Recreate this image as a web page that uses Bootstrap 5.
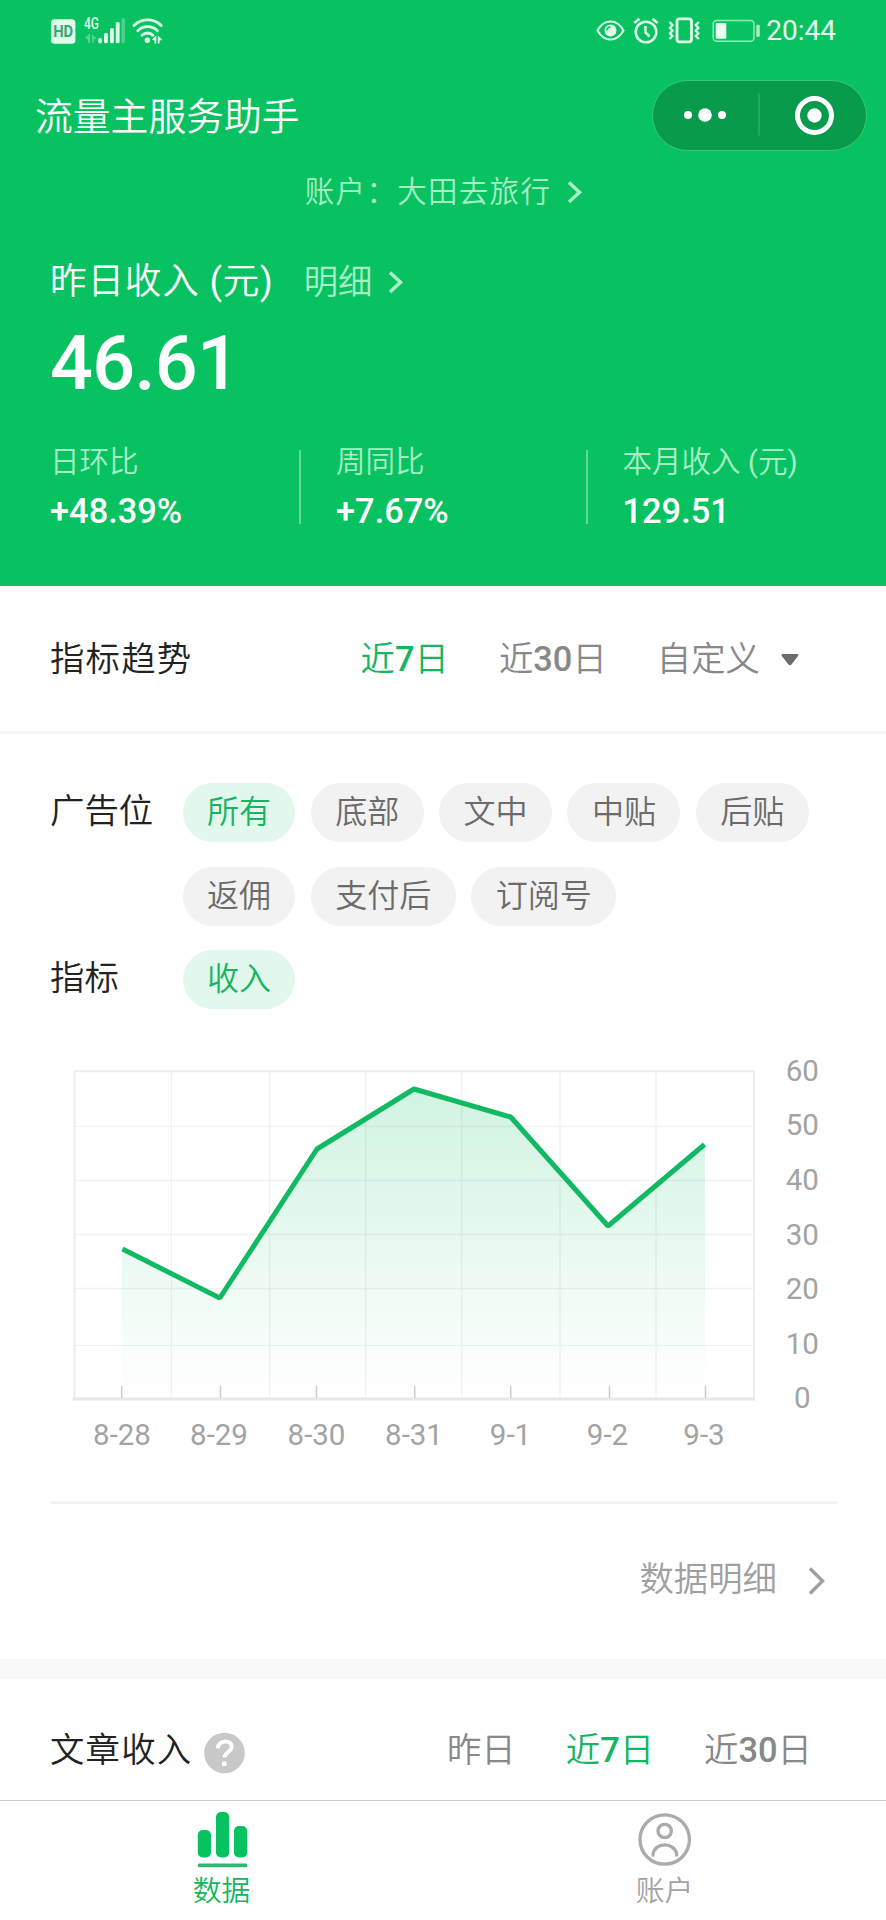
<!DOCTYPE html>
<html lang="zh-CN">
<head>
<meta charset="utf-8">
<meta name="viewport" content="width=device-width, initial-scale=1">
<title>流量主服务助手</title>
<link href="https://cdn.jsdelivr.net/npm/bootstrap@5.3.0/dist/css/bootstrap.min.css" rel="stylesheet">
<style>
  :root { --brand: #08c261; --brand-text: #16b55f; }
  body { font-family: Roboto, "Noto Sans CJK SC DemiLight", "Noto Sans CJK SC", sans-serif; font-size: 34.4px; line-height: 48px; color: #222; background: #fff; }
  .screen { height: 1920px; }
  .hero { height: 586px; background: var(--brand); }
  .status-row { height: 62px; padding: 0 50px 0 48px; }
  .clock { font-size: 28px; line-height: 34px; color: #e6fbef; margin-left: 1px; }
  .title-row { height: 106px; padding: 0 19px 0 35px; }
  .app-title { font-size: 37.8px; padding-top: 3px; }
  .capsule { width: 215px; height: 71px; border: 1.5px solid #36c979; background: #079b4b; }
  .account { height: 48px; font-size: 29.5px; letter-spacing: 1.3px; color: #a6efc6; padding-left: 2px; }
  .soft { color: #a6efc6; }
  .income { padding: 41px 50px 0; }
  .income-head { height: 50px; font-size: 36.6px; letter-spacing: .8px; }
  .detail { font-size: 34.4px; letter-spacing: 0; margin-left: 30px; }
  .amount { font-size: 75.5px; line-height: 80px; font-weight: 500; letter-spacing: -.7px; }
  .stats { margin-top: 47px; }
  .stat { width: 286.5px; height: 74px; flex-shrink: 0; }
  .stat + .stat { border-left: 2px solid #5edb97; padding-left: 35px; }
  .stat:first-child { width: 249px; }
  .stat-label { font-size: 29.5px; line-height: 36px; margin-top: -6px; color: #a6efc6; }
  .stat-value { font-size: 34.4px; font-weight: 500; line-height: 40px; margin-top: 11px; }
  .digit { font-weight: 500; }
  .bar-row { height: 148px; padding: 0 87px 0 50px; border-bottom: 3px solid #f3f3f3; }
  .heading { letter-spacing: 1.2px; }
  .tab { color: #888; }
  .tab + .tab { margin-left: 50px; }
  .tab.on { color: var(--brand-text); }
  .caret { margin-left: 21px; margin-top: 2px; }
  .filters { padding: 49px 0 0 50px; }
  .filter-label { width: 132.500px; line-height: 57px; }
  .chips { gap: 24.5px 15.4px; }
  .chip { height: 59px; padding: 0 24.4px; font-size: 32.1px; line-height: 58px; color: #6b6b6b; background: #f2f2f2; }
  .chip.on { color: var(--brand-text); background: #e3f8ec; }
  .plot { display: block; }
  .plot text { font-size: 29.5px; fill: #a3a3a3; text-anchor: middle; }
  .more { margin: 0 49px 0 50px; border-top: 3px solid #f3f3f3; height: 158px; padding-right: 12px; color: #a0a0a0; }
  .more-text { padding-bottom: 5px; margin-right: 31px; }
  .band { height: 20px; background: #f9f9f9; }
  .article-row { height: 121px; padding: 47px 74px 0 50px; }
  .help { margin-left: 12px; }
  .tabbar { height: 120px; border-top: 1px solid #ccc; font-size: 28.8px; line-height: 36px; color: #a3a3a3; }
  .tabbar .on { color: var(--brand-text); }
</style>
</head>
<body>
<div class="screen d-flex flex-column overflow-hidden">
  <header class="hero text-white flex-shrink-0">
    <div class="status-row d-flex align-items-center justify-content-between">
      <svg width="118" height="34" viewBox="48 14 118 34" fill="#dffbea">
        <rect x="51" y="19.3" width="24.4" height="24.4" rx="3.5"/>
        <text x="63.2" y="37.3" font-size="16" font-weight="700" text-anchor="middle" fill="#3aa76d" textLength="20" lengthAdjust="spacingAndGlyphs">HD</text>
        <text x="84" y="29.3" font-size="16" font-weight="500" textLength="15" lengthAdjust="spacingAndGlyphs">4G</text>
        <path d="M90 34v9h-2v-3.500l-3-1.500 4-4zM92 34l4.500 4.500-3 1v3.500h-1.500z" opacity=".35"/>
        <rect x="98.300" y="38" width="3.600" height="5.300" rx="1.500"/>
        <rect x="104" y="33" width="3.800" height="10.300" rx="1.500"/>
        <rect x="110" y="28" width="3.800" height="15.300" rx="1.500"/>
        <rect x="115.800" y="22" width="3.800" height="21.300" rx="1.500"/>
        <rect x="121.500" y="18" width="3.500" height="25.300" rx="1.500" opacity=".3"/>
        <g fill="none" stroke="#dffbea" stroke-width="2.800" stroke-linecap="round">
          <path d="M134 25.500a19.500 19.500 0 0 1 27.200 0M137.800 30.700a14 14 0 0 1 19.600 0M142 35.200a8 8 0 0 1 11 0"/>
        </g>
        <circle cx="147.300" cy="40.200" r="2.700"/>
        <path d="M156.300 35.500v8h-1.800v-3l-2.500-1zM157.800 35.500l4.700 4.500-3 .5v3h-1.700z"/>
      </svg>
      <div class="d-flex align-items-center">
        <svg width="170" height="34" viewBox="594 14 170 34" fill="none" stroke="#dffbea" stroke-width="2">
          <path d="M596.500 30.500c3-5.500 8-9 13-9s10 3.500 13 9c-3 5.500-8 9-13 9s-10-3.500-13-9z"/>
          <circle cx="609.500" cy="30.500" r="6" fill="#dffbea" stroke="none"/>
          <path d="M605.800 30.500a4 4 0 0 1 3.700-3.600" stroke="#08c261" stroke-width="1.500"/>
          <circle cx="645" cy="32" r="10.300" stroke-width="2.500"/>
          <path d="M644.500 26v6.500l4 4" stroke-width="2.500"/>
          <path d="M633.300 23l5.200-4.200M656.700 23l-5.200-4.200" stroke-width="2.600"/>
          <rect x="676" y="18.800" width="14.500" height="23" rx="2.500" stroke-width="2.800"/>
          <path d="M668.500 22l3 3-2.500 3 2.500 2.500-2.500 3 2.500 2.500-3 3M697.800 22l-3 3 2.500 3-2.500 2.500 2.500 3-2.500 2.500 3 3" stroke-width="2.300"/>
          <rect x="712.200" y="20.400" width="40.800" height="20.800" rx="3.500" stroke="#8febb8" stroke-width="1.500"/>
          <rect x="714.700" y="23" width="10.600" height="15.800" rx="1" fill="#e9fdf2" stroke="none"/>
          <rect x="755.300" y="24.500" width="3.500" height="12.500" rx="1.600" fill="#a6efc6" stroke="none"/>
        </svg>
        <span class="clock">20:44</span>
      </div>
    </div>
    <div class="title-row d-flex align-items-center justify-content-between">
      <span class="app-title">流量主服务助手</span>
      <div class="capsule rounded-pill d-flex align-items-center">
        <svg width="212" height="68" viewBox="0 0 212 68" fill="#fff">
          <circle cx="35" cy="34" r="4"/><circle cx="52" cy="34" r="6.800"/><circle cx="69" cy="34" r="4"/>
          <path d="M106 12.500v42" stroke="#36b56e" stroke-width="1.200"/>
          <circle cx="161.500" cy="34.500" r="17" fill="none" stroke="#fff" stroke-width="5"/><circle cx="161.500" cy="34.500" r="7.200"/>
        </svg>
      </div>
    </div>
    <div class="account d-flex align-items-center justify-content-center">
      <span>账户：大田去旅行</span>
      <svg class="ms-3" width="16" height="24" viewBox="0 0 16 24" fill="none" stroke="#a6efc6" stroke-width="3.500"><path d="M2 2.500l10.500 9.700L2 22"/></svg>
    </div>
    <div class="income">
      <div class="income-head d-flex align-items-center">
        <span>昨日收入 (元)</span>
        <span class="detail soft">明细</span>
        <svg class="ms-3" width="16" height="24" viewBox="0 0 16 24" fill="none" stroke="#a6efc6" stroke-width="3.500"><path d="M2 2.500l10.500 9.700L2 22"/></svg>
      </div>
      <div class="amount mt-3">46.61</div>
      <div class="d-flex stats">
        <div class="stat"><div class="stat-label">日环比</div><div class="stat-value">+48.39%</div></div>
        <div class="stat"><div class="stat-label">周同比</div><div class="stat-value">+7.67%</div></div>
        <div class="stat"><div class="stat-label">本月收入 (元)</div><div class="stat-value">129.51</div></div>
      </div>
    </div>
  </header>

  <section class="flex-shrink-0">
    <div class="bar-row d-flex align-items-center">
      <span class="heading me-auto">指标趋势</span>
      <span class="tab on">近<span class="digit">7</span>日</span>
      <span class="tab">近<span class="digit">30</span>日</span>
      <span class="tab">自定义</span>
      <svg class="caret" width="18" height="12" viewBox="0 0 18 12"><path d="M1.500 0h15q1.500 .5.500 2l-6.500 8.500q-1.500 1.500-3 0L.8 2q-1-1.500.7-2z" fill="#6b6b6b"/></svg>
    </div>
    <div class="filters">
      <div class="d-flex">
        <div class="filter-label flex-shrink-0">广告位</div>
        <div class="chips d-flex flex-wrap">
          <span class="chip on rounded-pill">所有</span><span class="chip rounded-pill">底部</span><span class="chip rounded-pill">文中</span><span class="chip rounded-pill">中贴</span><span class="chip rounded-pill">后贴</span>
          <span class="chip rounded-pill">返佣</span><span class="chip rounded-pill">支付后</span><span class="chip rounded-pill">订阅号</span>
        </div>
      </div>
      <div class="d-flex mt-4">
        <div class="filter-label flex-shrink-0">指标</div>
        <span class="chip on rounded-pill">收入</span>
      </div>
    </div>
    <svg class="plot" width="886" height="492" viewBox="0 1009 886 492">
      <defs><linearGradient id="fade" x1="0" y1="1088" x2="0" y2="1398" gradientUnits="userSpaceOnUse"><stop offset="0" stop-color="#08c261" stop-opacity=".19"/><stop offset="1" stop-color="#08c261" stop-opacity="0"/></linearGradient></defs>
      <path d="M122 1249L220 1298 317 1149 414 1089 511 1117 608 1226 705 1144V1398H122z" fill="url(#fade)"/>
      <path d="M74 1126.300H754M74 1180.500H754M74 1234.500H754M74 1288.500H754M74 1345.300H754M171.300 1071V1398M269.500 1071V1398M365.500 1071V1398M461.700 1071V1398M560 1071V1398M656 1071V1398" stroke="#000" stroke-opacity=".055" stroke-width="1.300"/>
      <path d="M74.500 1399V1071.300H754V1399" fill="none" stroke="#ededed" stroke-width="2"/>
      <path d="M72.500 1399H755" stroke="#e8e8e8" stroke-width="2.800"/>
      <path d="M121.700 1386V1398M220.500 1386V1398M316.500 1386V1398M414.700 1386V1398M510.700 1386V1398M609.500 1386V1398M705.500 1386V1398" stroke="#ccc" stroke-width="1.500"/>
      <path d="M122.500 1249L219.800 1298 317 1149 414 1089 510.700 1117 608 1226 704.500 1144.500" fill="none" stroke="#12b963" stroke-width="5" stroke-linejoin="bevel"/>
      <g><text x="122" y="1445">8-28</text><text x="219" y="1445">8-29</text><text x="316.500" y="1445">8-30</text><text x="414" y="1445">8-31</text><text x="510.500" y="1445">9-1</text><text x="607.500" y="1445">9-2</text><text x="704" y="1445">9-3</text></g>
      <g><text x="802.300" y="1080.500">60</text><text x="802.300" y="1135">50</text><text x="802.300" y="1190">40</text><text x="802.300" y="1244.500">30</text><text x="802.300" y="1299">20</text><text x="802.300" y="1353.500">10</text><text x="802.300" y="1407.500">0</text></g>
    </svg>
    <div class="more d-flex align-items-center justify-content-end">
      <span class="more-text">数据明细</span>
      <svg width="17" height="28" viewBox="0 0 17 28" fill="none" stroke="#a0a0a0" stroke-width="3.500"><path d="M2 1.500l12.500 12.500L2 26.500"/></svg>
    </div>
  </section>
  <div class="band flex-shrink-0"></div>
  <section class="article-row d-flex align-items-start flex-shrink-0">
    <span class="heading">文章收入</span>
    <svg class="help me-auto" width="41" height="48" viewBox="0 0 41 48"><circle cx="20.500" cy="27" r="20.300" fill="#c8c8c8"/><path d="M13.800 22.300c.5-9 14-9 13.800-1.300-.2 5.200-7 5-7 10.500" fill="none" stroke="#fff" stroke-width="4"/><rect x="18" y="35.500" width="4.600" height="4.600" rx="1" fill="#fff"/></svg>
    <span class="tab">昨日</span>
    <span class="tab on">近<span class="digit">7</span>日</span>
    <span class="tab">近<span class="digit">30</span>日</span>
  </section>
  <nav class="tabbar d-flex text-center flex-shrink-0">
    <div class="w-50 on d-flex flex-column align-items-center">
      <svg width="52" height="72" viewBox="195 1801 52 72" fill="#08c261"><rect x="196.800" y="1830" width="13.200" height="27.500" rx="5"/><rect x="215" y="1812" width="13.200" height="45.500" rx="5"/><rect x="233" y="1826" width="13.200" height="31.500" rx="5"/><rect x="196.800" y="1863.500" width="49.500" height="3.800" rx="1.500" fill="#2fba72"/></svg>
      <span>数据</span>
    </div>
    <div class="w-50 d-flex flex-column align-items-center">
      <svg width="56" height="72" viewBox="637 1801 56 72" fill="none" stroke="#ababab" stroke-width="3.300"><circle cx="664.700" cy="1839.500" r="24.700"/><circle cx="664.700" cy="1831" r="6.700"/><path d="M653 1855c1-13.500 22.500-13.500 23.700 0" stroke-linecap="round"/></svg>
      <span>账户</span>
    </div>
  </nav>
</div>
<script src="https://cdn.jsdelivr.net/npm/bootstrap@5.3.0/dist/js/bootstrap.bundle.min.js"></script>
</body>
</html>
